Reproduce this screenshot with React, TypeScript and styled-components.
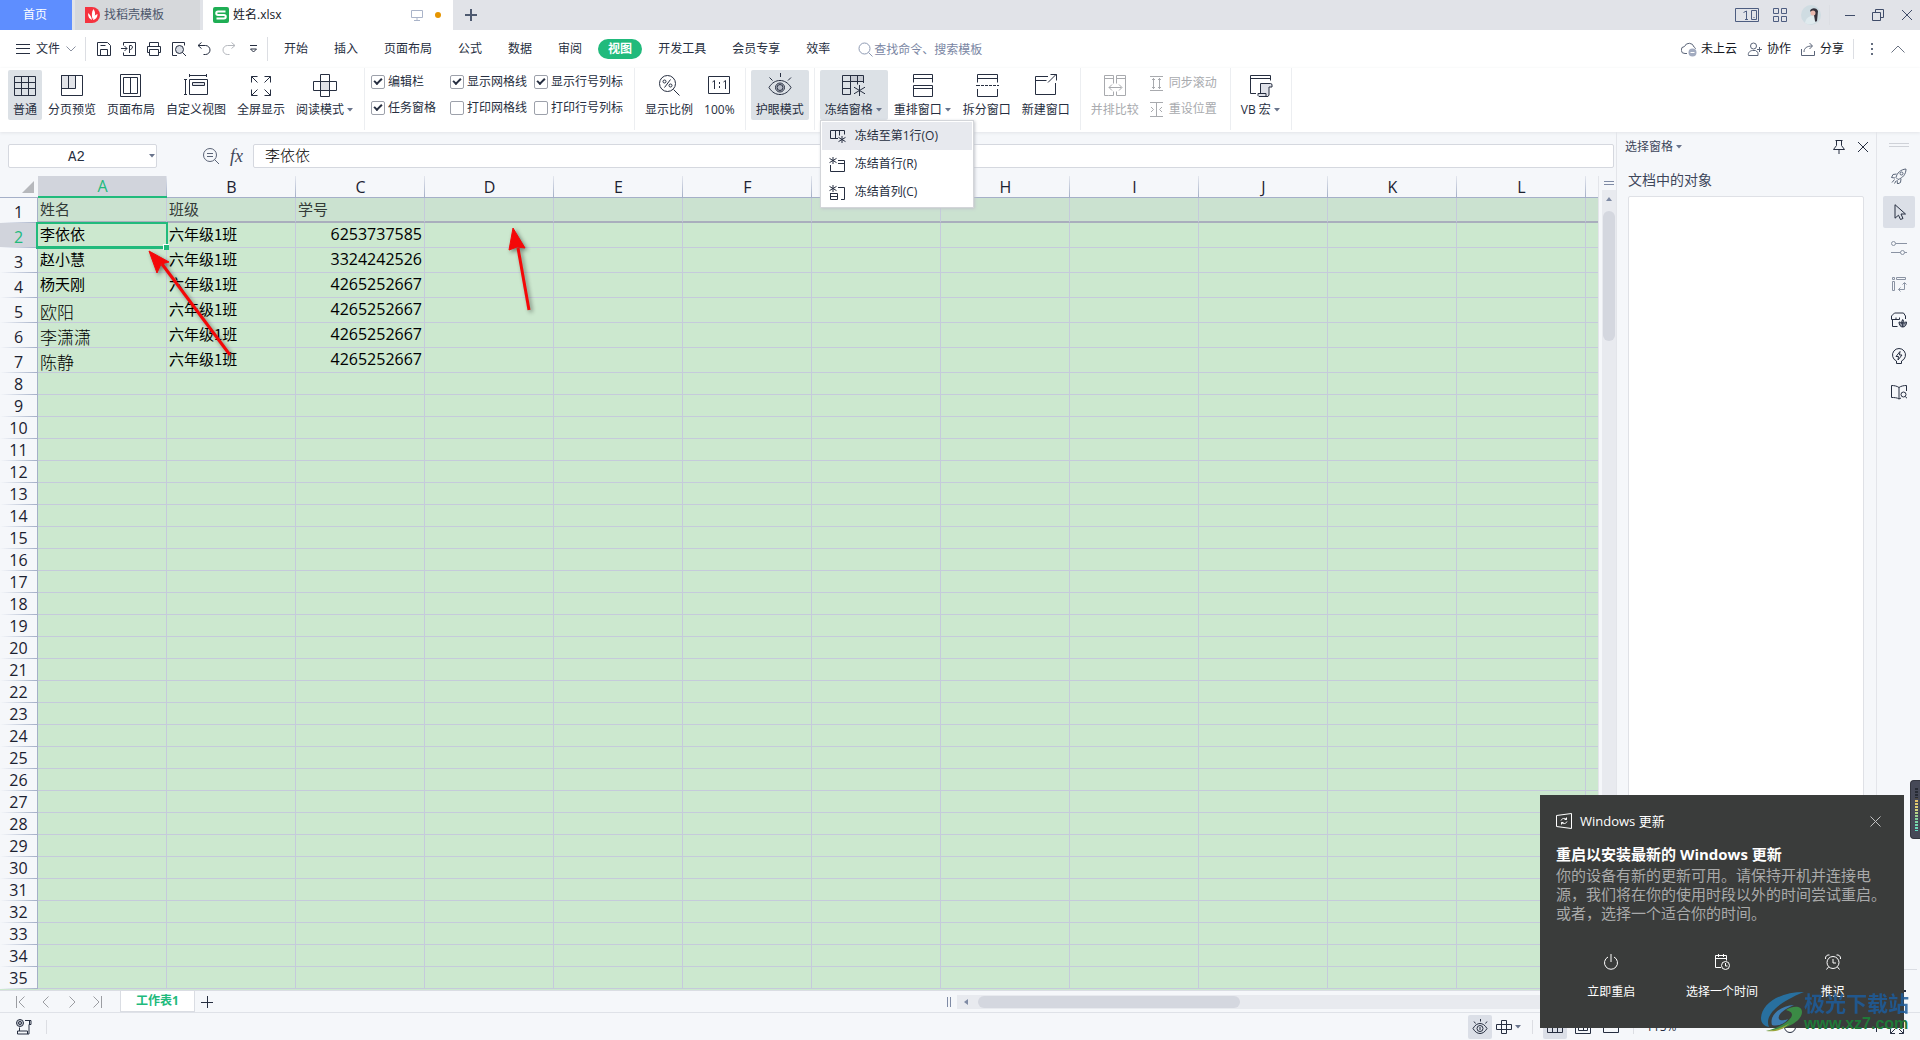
import React from "react";
import styled, { createGlobalStyle, css } from "styled-components";

const ui = `"Open Sans", "Noto Sans CJK SC", sans-serif`;
const cjk = `"Noto Sans CJK SC", sans-serif`;

const c = {
  ink: "#262e40",
  line: "#e3e5ea",
  panel: "#f5f7fa",
  track: "#e8eaef",
  thumb: "#d4d7df",
  active: "#dce1e6",
  rail: "#dbdfe7",
  green: "#21ba7c",
  grid: "#c5cadb",
  head: "#a5b0c8",
  sheet: "#cce8cf",
};

const Global = createGlobalStyle`
  *, *::before, *::after { box-sizing: border-box; }
  body { margin: 0; overflow: hidden; font: 12px/18px ${ui}; color: ${c.ink}; background: ${c.panel}; }
  button, input { font: inherit; color: inherit; }
  button { border: 0; padding: 0; background: none; display: flex; align-items: center; white-space: nowrap; }
  svg { display: block; flex: none; }
`;

/* ---------- icon primitive ---------- */

type IconProps = {
  w?: number;
  h?: number;
  color?: string;
  sw?: number;
  d?: string;
  children?: React.ReactNode;
};

const Icon = ({ w = 16, h, color = c.ink, sw = 1, d, children }: IconProps) => (
  <svg width={w} height={h ?? w} viewBox={`0 0 ${w} ${h ?? w}`} fill="none" stroke={color} strokeWidth={sw} aria-hidden="true">
    {d && <path d={d} />}
    {children}
  </svg>
);

const Caret = ({ color = "#69748c" }: { color?: string }) => (
  <svg width="10" height="6" viewBox="0 0 10 6" aria-hidden="true">
    <path d="M3 1h6L6 4.500z" fill={color} />
  </svg>
);

/* ---------- shell ---------- */

const Shell = styled.div`
  position: relative;
  display: flex;
  flex-direction: column;
  height: 100vh;
  overflow: hidden;
`;

const Spacer = styled.div`
  flex: 1;
`;

const Divider = styled.span<{ $h: number }>`
  flex: none;
  width: 1px;
  height: ${(p) => p.$h}px;
  background: #dcdee3;
`;

/* ---------- title bar ---------- */

const TitleBar = styled.header`
  display: flex;
  align-items: center;
  height: 30px;
  flex: none;
  background: #e1e3e8;
  padding-right: 6px;
`;

const DocTab = styled.button<{ $w: number; $kind: "home" | "idle" | "open" }>`
  width: ${(p) => p.$w}px;
  height: 30px;
  margin-right: 3px;
  gap: 4px;
  padding: 0 12px 0 10px;
  background: ${(p) => ({ home: "#5e8eff", idle: "#d6d8db", open: "#fff" })[p.$kind]};
  color: ${(p) => ({ home: "#fff", idle: "#4c566b", open: "#15181f" })[p.$kind]};
  justify-content: ${(p) => (p.$kind === "home" ? "center" : "flex-start")};
`;

const Dot = styled.span`
  width: 6px;
  height: 6px;
  margin-left: 8px;
  border-radius: 50%;
  background: #e69500;
`;

const TitleTools = styled.div`
  display: flex;
  align-items: center;
  gap: 14px;
`;

const WindowTools = styled.div`
  display: flex;
  align-items: center;
  gap: 14px;
  margin-left: 8px;
`;

/* ---------- menu bar ---------- */

const MenuBar = styled.nav`
  display: flex;
  align-items: center;
  height: 38px;
  flex: none;
  background: #fff;
  padding: 0 14px 0 16px;
`;

const FileButton = styled.button`
  gap: 6px;
  padding-right: 9px;
`;

const QuickTools = styled.div`
  display: flex;
  padding: 0 1px 0 5px;
`;

const QuickButton = styled.button`
  width: 25px;
  height: 24px;
  justify-content: center;
`;

const MenuTabs = styled.div`
  display: flex;
  gap: 6px;
  padding: 0 18px 0 6px;
`;

const MenuTab = styled.button<{ $on?: boolean }>`
  height: 20px;
  padding: 0 10px;
  border-radius: 10px;
  ${(p) =>
    p.$on &&
    css`
      background: ${c.green};
      color: #fff;
      font-weight: 700;
    `}
`;

const Search = styled.label`
  display: flex;
  align-items: center;
  gap: 1px;
  input {
    width: 140px;
    height: 20px;
    padding: 0;
    border: 0;
    outline: 0;
    background: none;
  }
  input::placeholder {
    color: #7a86a3;
    opacity: 1;
  }
`;

const CloudTools = styled.div`
  display: flex;
  align-items: center;
  gap: 9px;
`;

const CloudButton = styled.button`
  gap: 4px;
  color: #15181f;
`;

/* ---------- ribbon ---------- */

const Ribbon = styled.section`
  display: flex;
  height: 64px;
  flex: none;
  padding-left: 3px;
  background: #fff;
  box-shadow: 0 1px 3px #e2e4e8;
`;

const Group = styled.div`
  display: flex;
  gap: 1px;
  height: 62px;
  padding: 2px 5px 0;
  border-right: 1px solid #eceef1;
`;

const Tool = styled.button<{ $on?: boolean; $off?: boolean }>`
  flex-direction: column;
  height: 50px;
  min-width: 34px;
  padding: 3px 5px 0;
  gap: 4px;
  border-radius: 2px;
  background: ${(p) => (p.$on ? c.active : "none")};
  color: ${(p) => (p.$off ? "#a8aaae" : c.ink)};
  span {
    display: flex;
    align-items: center;
  }
`;

const Checks = styled.div`
  display: grid;
  grid-template-columns: 79px 84px 95px;
  grid-template-rows: 26px 26px;
  padding-left: 1px;
  margin-top: -1px;
`;

const Check = styled.label`
  display: flex;
  align-items: center;
  gap: 3px;
  white-space: nowrap;
  input {
    appearance: none;
    position: relative;
    width: 14px;
    height: 14px;
    margin: 0;
    border: 1px solid #9da1ab;
    border-radius: 2px;
    background: #fff;
  }
  input:checked::after {
    content: "";
    position: absolute;
    left: 2px;
    top: 2px;
    width: 8px;
    height: 5px;
    border: solid ${c.ink};
    border-width: 0 0 2px 2px;
    transform: rotate(-45deg);
  }
`;

const SmallTools = styled.div`
  display: grid;
  grid-template-rows: 26px 26px;
  padding: 0 8px 0 5px;
`;

const SmallTool = styled.button`
  gap: 5px;
  color: #a8aaae;
`;

const MenuAnchor = styled.div`
  position: relative;
`;

const Menu = styled.ul`
  position: absolute;
  z-index: 5;
  top: 50px;
  left: 0;
  width: 154px;
  margin: 0;
  padding: 1px;
  list-style: none;
  background: #fff;
  border: 1px solid #d3d5d9;
  box-shadow: 1px 1px 3px #c3c6cc;
`;

const MenuItem = styled.button<{ $on?: boolean }>`
  width: 100%;
  height: 28px;
  padding-left: 7px;
  gap: 9px;
  background: ${(p) => (p.$on ? "#e7e9ee" : "none")};
`;

/* ---------- workspace ---------- */

const Work = styled.main`
  display: flex;
  flex: 1;
  min-height: 0;
`;

const Book = styled.section`
  display: flex;
  flex-direction: column;
  flex: 1;
  min-width: 0;
`;

const FormulaBar = styled.div`
  display: flex;
  align-items: center;
  height: 44px;
  flex: none;
  padding: 4px 2px 0 8px;
`;

const NameBox = styled.label`
  position: relative;
  display: flex;
  align-items: center;
  width: 149px;
  input {
    width: 100%;
    height: 24px;
    padding: 2px 12px 0 0;
    border: 1px solid #d5d8df;
    border-radius: 2px;
    background: #fff;
    text-align: center;
    font: 14px "Liberation Mono", monospace;
  }
  svg {
    position: absolute;
    right: 1px;
  }
`;

const FormulaTools = styled.div`
  display: flex;
  align-items: center;
  width: 96px;
  padding-left: 45px;
  gap: 10px;
`;

const Fx = styled.button`
  font: italic 18px/20px "Liberation Serif", serif;
  color: #3f4658;
`;

const Formula = styled.input`
  flex: 1;
  min-width: 0;
  height: 24px;
  padding: 0 12px 4px 11px;
  border: 1px solid #d5d8df;
  border-radius: 2px;
  background: #fff;
  font: 300 15px/18px ${cjk};
  color: #000;
  outline: 0;
`;

const SheetRow = styled.div`
  display: flex;
  flex: 1;
  min-height: 0;
`;

const Sheet = styled.div`
  position: relative;
  flex: 1;
  min-width: 0;
  overflow: hidden;
  background: ${c.sheet};
`;

const Table = styled.table`
  width: 1715px;
  table-layout: fixed;
  border-collapse: separate;
  border-spacing: 0;
  font: 15px/20px ${cjk};
  color: #000;
  th,
  td {
    padding: 0 2px;
    white-space: nowrap;
  }
`;

const ColHead = styled.th<{ $on?: boolean }>`
  height: 22px;
  font: 16px/20px "Open Sans", sans-serif;
  color: ${(p) => (p.$on ? c.green : "#1c2231")};
  background: linear-gradient(to bottom, #e4e7ee, ${c.head}) right / 1px 100% no-repeat ${(p) => (p.$on ? "#d1d4dc" : c.panel)};
  border-bottom: ${(p) => (p.$on ? `2px solid ${c.green}` : `1px solid ${c.head}`)};
`;

const Corner = styled.td`
  height: 22px;
  background: ${c.panel};
  border-bottom: 1px solid ${c.head};
  svg {
    margin-left: 20px;
  }
`;

const RowHead = styled.th<{ $h: number; $on?: boolean }>`
  height: ${(p) => p.$h}px;
  && {
    padding-bottom: 1px;
  }
  vertical-align: bottom;
  font: 16px/20px "Open Sans", sans-serif;
  color: ${(p) => (p.$on ? c.green : "#1c2231")};
  background: linear-gradient(to right, ${c.panel}, ${c.head}) bottom / 100% 1px no-repeat ${(p) => (p.$on ? "#d1d4dc" : c.panel)};
  border-right: 1px solid ${c.head};
`;

const Cell = styled.td<{ $frozen?: boolean; $num?: boolean; $song?: boolean; $sel?: boolean }>`
  && {
    padding-bottom: ${(p) => (p.$song ? 0 : 2)}px;
  }
  border-right: 1px solid ${c.grid};
  border-bottom: 1px solid ${c.grid};
  ${(p) =>
    p.$frozen &&
    css`
      background: #cbe2d0;
      color: #333b38;
      border-bottom: 2px solid #a9aebd;
    `}
  ${(p) =>
    p.$num &&
    css`
      text-align: right;
      font: 16px/20px "Open Sans", sans-serif;
    `}
  ${(p) =>
    p.$song &&
    css`
      vertical-align: bottom;
      font-size: 17px;
      font-weight: 300;
    `}
  ${(p) =>
    p.$sel &&
    css`
      position: relative;
      &::before {
        content: "";
        position: absolute;
        inset: -1px -2px -2px -2px;
        border: 2px solid ${c.green};
        border-bottom-width: 3px;
      }
      &::after {
        content: "";
        position: absolute;
        right: -3px;
        bottom: -3px;
        width: 6px;
        height: 6px;
        border: solid #fff;
        border-width: 1px 0 0 1px;
        background: ${c.green};
      }
    `}
`;

const VScroll = styled.div`
  display: flex;
  flex-direction: column;
  align-items: center;
  width: 18px;
  flex: none;
  padding: 5px 0 0 3px;
  border-left: 1px solid ${c.line};
  gap: 5px;
`;

const VTrack = styled.div`
  display: flex;
  flex-direction: column;
  align-items: center;
  flex: 1;
  width: 100%;
  padding-top: 7px;
  gap: 10px;
  background: ${c.track};
`;

const Thumb = styled.div<{ $w: number; $h: number }>`
  width: ${(p) => p.$w}px;
  height: ${(p) => p.$h}px;
  border-radius: 6px;
  background: ${c.thumb};
`;

const SheetBar = styled.div`
  display: flex;
  align-items: center;
  height: 22px;
  flex: none;
  padding-left: 15px;
  border-top: 1px solid #dadde3;
`;

const SheetNav = styled.div`
  display: flex;
  width: 105px;
  gap: 14px;
`;

const SheetTab = styled.button`
  width: 75px;
  height: 21px;
  justify-content: center;
  margin-right: 5px;
  background: #fff;
  border: solid #dadde3;
  border-width: 0 1px 1px;
  color: ${c.green};
  font-weight: 700;
`;

const HScroll = styled.div`
  display: flex;
  align-items: center;
  gap: 6px;
  width: 41.8%;
`;

const HTrack = styled.div`
  display: flex;
  align-items: center;
  flex: 1;
  height: 14px;
  padding-left: 6px;
  gap: 9px;
  background: ${c.track};
`;

/* ---------- selection pane ---------- */

const Pane = styled.aside`
  display: flex;
  flex-direction: column;
  width: 261px;
  flex: none;
  padding: 6px 12px 24px 8px;
  border: solid ${c.line};
  border-width: 0 1px;
  color: #3d465a;
`;

const PaneHead = styled.div`
  display: flex;
  align-items: center;
  height: 18px;
  gap: 14px;
  margin-right: -7px;
`;

const PaneTools = styled.div`
  display: flex;
  gap: 10px;
  margin-right: 1px;
`;

const PaneTitle = styled.h2`
  margin: 13px 0 7px 3px;
  font: 14px/20px ${cjk};
`;

const PaneList = styled.div`
  flex: 1;
  margin-left: 3px;
  border: 1px solid #dfe1e6;
  border-radius: 2px;
  background: #fff;
`;

const Rail = styled.aside`
  display: flex;
  flex-direction: column;
  align-items: center;
  width: 43px;
  flex: none;
  gap: 4px;
  padding: 11px 0 0;
`;

const Grip = styled.span`
  width: 20px;
  height: 4px;
  margin-bottom: 9px;
  border: solid #cfd2d8;
  border-width: 1px 0;
`;

const RailButton = styled.button<{ $on?: boolean }>`
  width: 32px;
  height: 32px;
  justify-content: center;
  border-radius: 2px;
  background: ${(p) => (p.$on ? c.rail : "none")};
`;

const RailFoot = styled.div`
  align-self: stretch;
  display: flex;
  justify-content: center;
  height: 43px;
  margin: auto 3px 0;
  border-top: 1px solid #dadde3;
`;

/* ---------- status bar ---------- */

const StatusBar = styled.footer`
  display: flex;
  align-items: center;
  height: 28px;
  flex: none;
  padding: 0 15px;
  border-top: 1px solid #dfe2e8;
`;

const StatusButton = styled.button<{ $on?: boolean }>`
  height: 24px;
  min-width: 24px;
  justify-content: center;
  border-radius: 2px;
  background: ${(p) => (p.$on ? c.rail : "none")};
`;

const StatusGroup = styled.div<{ $after?: number; $before?: number }>`
  display: flex;
  align-items: center;
  gap: 4px;
  margin-left: ${(p) => p.$before ?? 0}px;
  margin-right: ${(p) => p.$after ?? 10}px;
`;

const Zoom = styled.div`
  display: flex;
  align-items: center;
  width: 271px;
  gap: 8px;
  padding-left: 12px;
  input {
    flex: 1;
    min-width: 0;
    appearance: none;
    height: 1px;
    margin: 0;
    background: #9aa3b5;
  }
  input::-webkit-slider-thumb {
    appearance: none;
    width: 12px;
    height: 12px;
    border: 1px solid ${c.ink};
    border-radius: 50%;
    background: #fff;
  }
`;

/* ---------- overlays ---------- */

const Toast = styled.section`
  position: absolute;
  z-index: 6;
  right: 16px;
  bottom: 12px;
  width: 364px;
  height: 233px;
  padding: 15px 13px 0 16px;
  background: #3a3c3b;
  color: #fff;
`;

const ToastHead = styled.div`
  display: flex;
  align-items: center;
  height: 22px;
  gap: 8px;
  padding-right: 10px;
  font-size: 13px;
`;

const ToastTitle = styled.h3`
  margin: 12px 0 0;
  font: 700 15px/20px ${ui};
`;

const ToastText = styled.p`
  margin: 1px 0 0;
  font: 15px/19px ${cjk};
  color: #a9aaaa;
`;

const ToastActions = styled.div`
  display: grid;
  grid-template-columns: repeat(3, 1fr);
  margin: 32px 3px 0 0;
`;

const ToastAction = styled.button`
  flex-direction: column;
  gap: 13px;
`;

const Meter = styled.div`
  position: absolute;
  z-index: 6;
  right: 0;
  top: 780px;
  width: 10px;
  height: 59px;
  padding: 7px 2px 7px 4px;
  border-radius: 4px 0 0 4px;
  background: #464957;
  border: 1px solid #34363f;
  border-right: 0;
`;

const Bars = styled.div`
  height: 100%;
  background: repeating-linear-gradient(to bottom, transparent 0 2px, #464957 2px 3px),
    linear-gradient(to bottom, #262a33 0 24%, #e5bd63 26%, #d8d57c 50%, #83d39b 72%, #63dcc5 100%);
`;

const Watermark = styled.div`
  position: absolute;
  z-index: 7;
  right: 11px;
  bottom: 7px;
  display: flex;
  align-items: center;
`;

const MarkName = styled.div`
  font: 700 21px/24px ${cjk};
  color: #1d5c9c;
  opacity: 0.85;
`;

const MarkUrl = styled.div`
  font: 700 16px/19px "Liberation Sans", sans-serif;
  color: #1f7a38;
`;

const Arrows = styled.svg`
  position: absolute;
  z-index: 3;
  left: 140px;
  top: 220px;
  pointer-events: none;
  filter: drop-shadow(2px 2px 2px rgba(0, 0, 0, 0.45));
`;

/* ---------- data ---------- */

const columns = "ABCDEFGHIJKL".split("");
const cells: string[][] = [
  ["姓名", "班级", "学号"],
  ["李依依", "六年级1班", "6253737585"],
  ["赵小慧", "六年级1班", "3324242526"],
  ["杨天刚", "六年级1班", "4265252667"],
  ["欧阳", "六年级1班", "4265252667"],
  ["李潇潇", "六年级1班", "4265252667"],
  ["陈静", "六年级1班", "4265252667"],
];

const quick: [string, React.ReactNode][] = [
  ["保存", <Icon d="M1.500 1.500h10l3 3v10h-13zM4.500 14.500v-6h7v6M4.500 4.500h5" />],
  ["输出为PDF", <Icon d="M2.500 4.500v-3h12v13h-12v-3M0 7.500h6M3.500 5l2.500 2.500-2.500 2.500M8.500 12v-7.500h2a2 2 0 1 1-2.500 3.500" />],
  ["打印", <Icon d="M3.500 5.500v-4h9v4M3.500 11.500h-2v-6h13v6h-2M3.500 8.500h9v6h-9z" />],
  [
    "打印预览",
    <Icon>
      <path d="M6 14.500H1.500v-13h12v3" />
      <circle cx="8.500" cy="8.500" r="4" fill="#d8dce4" />
      <path d="M11.500 11.500l3.500 3.500" />
    </Icon>,
  ],
  ["撤销", <Icon d="M5.500 1.500l-3.500 3 3.500 3M2 4.500h7.500a4.500 4.500 0 0 1 0 9h-2" />],
  ["恢复", <Icon color="#b4b7bd" d="M10.500 1.500l3.500 3-3.500 3M14 4.500H6.500a4.500 4.500 0 0 0 0 9h2" />],
  ["更多", <Icon w={9} h={10} d="M1 1.500h7M1.500 5l3 3 3-3z" />],
];

const asterisk = (x: number, y: number, r: number) =>
  `M${x} ${y - r}v${2 * r}M${x - r} ${y - r * 0.6}l${2 * r} ${1.2 * r}M${x + r} ${y - r * 0.6}l${-2 * r} ${1.2 * r}`;

const viewTools: [string, React.ReactNode, boolean?, boolean?][] = [
  ["普通", <Icon w={24} d="M1.500 3.500h21v19h-21zM8.500 3.500v19M15.500 3.500v19M1.500 9.500h21M1.500 15.500h21" />, true],
  [
    "分页预览",
    <Icon w={24}>
      <path d="M1.500 2.500h14v13h-14z" fill="#e2e4e9" />
      <path d="M1.500 2.500h21v20h-21zM8.500 2.500v13" />
    </Icon>,
  ],
  ["页面布局", <Icon w={24} d="M1.500 1.500h20v22h-20zM4.500 4.500h14v16h-14zM11.500 4.500v16" />],
  [
    "自定义视图",
    <Icon w={24}>
      <path d="M5.500 6.500h18v15h-18zM5 2.500h18M5.500 1v3M22.500 1v3M1.500 6.500v15M0 6.500h3M0 21.500h3" />
      <path d="M8.500 9.500h12v3h-12z" fill="#dfe1e7" />
    </Icon>,
  ],
  ["全屏显示", <Icon w={24} d="M8.500 3.500h-6v6M2.500 3.500l6 6M15.500 3.500h6v6M21.500 3.500l-6 6M8.500 22.500h-6v-6M2.500 22.500l6-6M15.500 22.500h6v-6M21.500 22.500l-6-6" />],
  [
    "阅读模式",
    <Icon w={24}>
      <path d="M7.500 8.500h9v9h-9z" fill="#dfe1e7" />
      <path d="M7.500 1.500h9v22h-9zM.500 8.500h23v9h-23z" />
    </Icon>,
    false,
    true,
  ],
];

const checks: [string, boolean][] = [
  ["编辑栏", true],
  ["显示网格线", true],
  ["显示行号列标", true],
  ["任务窗格", true],
  ["打印网格线", false],
  ["打印行号列标", false],
];

const windowTools: [string, React.ReactNode, boolean?][] = [
  [
    "重排窗口",
    <Icon w={24} d="M2.500 9.500v-8h19v8M2.500 5.500h19M2.500 12.500h19v11h-19zM2.500 15.500h19" />,
    true,
  ],
  ["拆分窗口", <Icon w={24} d="M2.500 9.500v-8h20v8M2.500 5.500h20M1 12.500h4M6 12.500h3M10 12.500h3M14 12.500h3M18 12.500h3M22 12.500h2M2.500 16v7.500h20v-7.500" />],
  ["新建窗口", <Icon w={24} d="M14 3.500H1.500v18h20V10M1.500 7.500h11M14 9.500l8.500-8.500M16.500 1.500h6v6" />],
];

const freezeItems: [string, React.ReactNode][] = [
  ["冻结至第1行(O)", <Icon w={17} d={"M9 10.500H1.500v-8h14v4M6.500 2.500v8M10.500 2.500v5" + asterisk(13, 11.500, 3.500)} />],
  ["冻结首行(R)", <Icon w={17} d={"M9 4.500h6.500v11h-14V9M9 7.500h6" + asterisk(4, 4.500, 3.500)} />],
  ["冻结首列(C)", <Icon w={17} d={"M9 3.500h6.500v12H12M1.500 9v6.500h7V9.500h-7M1.500 12.500h7" + asterisk(4, 4.500, 3.500)} />],
];

const rail: [string, React.ReactNode, boolean?][] = [
  [
    "快捷",
    <Icon color="#5b6679">
      <path d="M5 9.500c1-4.500 4.500-8 10-8.500 0 5.500-3.500 9-8 10.500zM5.500 6l-3.500.500-1.500 3 3.500.500M10 11l-.500 3.500-3 1.500-.500-4M3.500 11.500l-2.500 3M5 13l-1.500 2.500" />
      <circle cx="10.500" cy="5.500" r="1.500" />
    </Icon>,
  ],
  ["选择", <Icon d="M4 .700v13.500l3.500-3 2 4.300 2.500-1-2-4.500h4.500z" />, true],
  [
    "属性",
    <Icon color="#8a93a3">
      <circle cx="2.500" cy="3.500" r="2" />
      <circle cx="11.500" cy="12.500" r="2" />
      <path d="M4.500 3.500H16M0 12.500h9.500M13.500 12.500H16" />
    </Icon>,
  ],
  ["对齐", <Icon color="#8a93a3" d="M1.500 1.500h2v2h-2zM5.500 1.500h9v2h-9zM1.500 5.500h2v9h-2zM13.500 7v6.500h-6M11.500 8.500l2-2 2 2M9.500 11.500l-2 2 2 2" />],
  [
    "素材",
    <Icon>
      <path d="M6.500 14.500H1.500V8M14.500 7V4l-2-3h-9L.500 4v3.500h4.500V5.500M5 7.500h3.500V5.500" />
      <path d="M8 10c0 3 1.500 5 3.800 5s3.700-2 3.700-5c-1.200 0-2 .500-2.500 1.500 0-1.500-.500-3-1.300-4-.700 1-1.200 2.500-1.200 4C10 10.500 9.200 10 8 10z" fill="#8f95a3" />
      <path d="M11.700 10v5" />
    </Icon>,
  ],
  [
    "智能",
    <Icon>
      <path d="M5.500 13a6.500 6.500 0 1 1 5 0v2.500h-5zM9 3.500L5 8.500h2.500L7 12l4-5H8.500z" />
    </Icon>,
  ],
  [
    "查阅",
    <Icon>
      <path d="M8 3.500C6 2 3 1.500.500 1.500v12c2.500 0 5.500 0 7.500 1.500V3.500c2-1.500 5-2 7.500-2V7M8 15l2-1" />
      <circle cx="12.500" cy="10.500" r="2.500" />
      <path d="M14.500 12.500l1.500 2" />
    </Icon>,
  ],
];

const EyeIcon = () => (
  <Icon w={24}>
    <path d="M1 14.500C4 9.500 8 7.500 12 7.500s8 2 11 7c-3 5-7 7-11 7s-8-2-11-7z" />
    <circle cx="12" cy="14.500" r="4.500" fill="#c9cdd5" />
    <circle cx="12" cy="14.500" r="3" fill="#b5bac5" />
    <path d="M12.500 0v4M1.500 4.500l3 3M23 4.500l-3 3" />
  </Icon>
);

/* ---------- sections ---------- */

const TitleArea = () => (
  <TitleBar>
    <DocTab $w={72} $kind="home">首页</DocTab>
    <DocTab $w={125} $kind="idle">
      <svg width="15" height="16" viewBox="0 0 15 16" aria-hidden="true">
        <path d="M0 0h7a8 8 0 0 1 0 16H0z" fill="#f5333f" />
        <path d="M8.500 2c-2 3-2 6-1 10 3-3 3.500-6 1-10zM3 6c0 4 1.500 6 4 7-.500-3-1.500-5-4-7zM12.500 7c-3 1-4.500 3-4.500 6 3-.500 4.500-3 4.500-6z" fill="#fff" />
      </svg>
      找稻壳模板
    </DocTab>
    <DocTab $w={250} $kind="open">
      <svg width="16" height="16" viewBox="0 0 16 16" aria-hidden="true">
        <rect width="16" height="16" rx="2" fill="#1fae55" />
        <path d="M12.500 4.500H5A1.700 1.700 0 0 0 5 8h6a1.700 1.700 0 0 1 0 3.500H3.500" fill="none" stroke="#fff" strokeWidth="2" />
      </svg>
      姓名.xlsx
      <Spacer />
      <Icon w={12} color="#aab4c9" d="M.500 1.500h11v7H.500zM6 8.500v3M3 11.500h6" />
      <Dot />
    </DocTab>
    <button aria-label="新建标签">
      <Icon w={30} h={14} color="#4e5a70" sw={2} d="M9 7h12M15 1v12" />
    </button>
    <Spacer />
    <TitleTools>
      <button aria-label="窗口">
        <Icon w={24} h={14} color="#4d5d80" d="M.500.500h23v13H.500zM16.500 2.500h5v9h-5zM8.500 4.500l3-1.500v8M10 11.500h3M18.500 9.500h1" />
      </button>
      <button aria-label="应用">
        <Icon w={14} color="#4d5d80" d="M.500.500h5v5h-5zM8.500.500h5v5h-5zM.500 8.500h5v5h-5zM8.500 8.500h5v5h-5z" />
      </button>
      <button aria-label="账户">
        <svg width="20" height="20" viewBox="0 0 20 20" aria-hidden="true">
          <circle cx="10" cy="10" r="10" fill="#cfdce2" />
          <path d="M4 18c1-5 4-7 7-7s4 2 4 6a10 10 0 0 1-11 1z" fill="#dfeaee" />
          <path d="M9 6c1-3 6-4 8 0l-1 10c-1 1-2 1-2 0l-1-6z" fill="#33303a" />
          <circle cx="12" cy="8" r="2.500" fill="#e9b9ae" />
        </svg>
      </button>
    </TitleTools>
    <WindowTools>
      <Divider $h={20} />
      <button aria-label="最小化"><Icon w={14} color="#3f4c69" d="M1 7.500h10" /></button>
      <button aria-label="还原"><Icon w={14} color="#3f4c69" d="M.500 4.500h8v8h-8zM3.500 4v-2.500h8v8H9" /></button>
      <button aria-label="关闭"><Icon w={14} color="#3f4c69" d="M2 2l10 10M12 2L2 12" /></button>
    </WindowTools>
  </TitleBar>
);

const MenuArea = () => (
  <MenuBar>
    <FileButton>
      <Icon w={14} h={12} d="M0 1.500h14M0 5.500h14M0 10.500h14" />
      文件
      <Icon w={10} h={6} color="#8b91a0" d="M.500.500L5 5 9.500.500" />
    </FileButton>
    <Divider $h={24} />
    <QuickTools>
      {quick.map(([name, icon]) => (
        <QuickButton key={name} aria-label={name}>{icon}</QuickButton>
      ))}
    </QuickTools>
    <Divider $h={24} />
    <MenuTabs>
      {["开始", "插入", "页面布局", "公式", "数据", "审阅", "视图", "开发工具", "会员专享", "效率"].map((t) => (
        <MenuTab key={t} $on={t === "视图"}>{t}</MenuTab>
      ))}
    </MenuTabs>
    <Search>
      <Icon w={15} color="#8e9ab3">
        <circle cx="6.500" cy="6.500" r="5.500" />
        <path d="M10.500 10.500l4 4" />
      </Icon>
      <input type="text" aria-label="查找命令" placeholder="查找命令、搜索模板" />
    </Search>
    <Spacer />
    <CloudTools>
      <CloudButton>
        <Icon color="#5a6478">
          <path d="M6 12.500H4a3.500 3.500 0 0 1-.500-7 5 5 0 0 1 9.500.500c1 .500 1.500 1.500 1.500 2" />
          <circle cx="11.500" cy="11.500" r="4" fill="#a2abc0" stroke="none" />
          <path d="M9.500 11.500h4" stroke="#fff" />
        </Icon>
        未上云
      </CloudButton>
      <CloudButton>
        <Icon w={17} color="#5a6478">
          <circle cx="7.500" cy="5" r="3" />
          <path d="M2.500 14.500c-1-3 2-5 4-5h3l2.500 2v3zM11 8.500h5M13.500 6v5" />
        </Icon>
        协作
      </CloudButton>
      <CloudButton>
        <Icon color="#5a6478" d="M1.500 8v6.500h13V10M4 11c0-4 3-6 8-6M9.500 2l3 3-3 3" />
        分享
      </CloudButton>
      <Divider $h={20} />
      <button aria-label="更多选项">
        <Icon w={18} h={12} color="#646d7f" sw={2} d="M9 0v2M9 5v2M9 10v2" />
      </button>
      <button aria-label="收起功能区">
        <Icon w={16} h={10} color="#6a7282" d="M1.500 8.500L8 2l6.500 6.500" />
      </button>
    </CloudTools>
  </MenuBar>
);

const RibbonArea = () => (
  <Ribbon>
    <Group>
      {viewTools.map(([name, icon, on, caret]) => (
        <Tool key={name} $on={on}>
          {icon}
          <span>{name}{caret && <Caret />}</span>
        </Tool>
      ))}
    </Group>
    <Group>
      <Checks>
        {checks.map(([name, on]) => (
          <Check key={name}>
            <input type="checkbox" defaultChecked={on} />
            {name}
          </Check>
        ))}
      </Checks>
    </Group>
    <Group>
      <Tool>
        <Icon w={24}>
          <circle cx="10.500" cy="10.500" r="8" />
          <path d="M16.500 16.500l6 6M7.500 14.500l6-8" />
          <circle cx="7.500" cy="8.500" r="1.500" />
          <circle cx="13.500" cy="12.500" r="1.500" />
        </Icon>
        <span>显示比例</span>
      </Tool>
      <Tool>
        <Icon w={24} d="M1.500 3.500h21v17h-21zM5.500 9l2-1.500v8.500M16.500 9l2-1.500v8.500M12.500 9v2M12.500 13v2" />
        <span>100%</span>
      </Tool>
    </Group>
    <Group>
      <Tool $on>
        <EyeIcon />
        <span>护眼模式</span>
      </Tool>
    </Group>
    <Group>
      <MenuAnchor>
        <Tool $on aria-haspopup="menu" aria-expanded="true">
          <Icon w={24}>
            <path d="M8.500 2.500h13v6h-13z" fill="#c6cad2" stroke="none" />
            <path d={"M21.500 10V2.500h-21v19h8v-19M.500 8.500h21M15.500 2.500v9M.500 15.500h8" + asterisk(17.500, 17.500, 5.500)} />
          </Icon>
          <span>冻结窗格<Caret /></span>
        </Tool>
        <Menu>
          {freezeItems.map(([name, icon], i) => (
            <li key={name}>
              <MenuItem $on={i === 0}>{icon}{name}</MenuItem>
            </li>
          ))}
        </Menu>
      </MenuAnchor>
      {windowTools.map(([name, icon, caret]) => (
        <Tool key={name}>
          {icon}
          <span>{name}{caret && <Caret />}</span>
        </Tool>
      ))}
    </Group>
    <Group>
      <Tool $off>
        <Icon w={24} color="#a8aaae" d="M5.500 22.500h-4v-20h9v8M1.500 5.500h9M13.500 10.500v-8h9v20h-9v-4M13.500 5.500h9M10.500 18.500v4h-5M6 14.500h12.500M9 11.500l-3 3 3 3M16 11.500l3 3-3 3" />
        <span>并排比较</span>
      </Tool>
      <SmallTools>
        <SmallTool>
          <Icon w={14} h={15} color="#a8aaae" d="M0 .500h13M0 14.500h13M3.500 2v11M9.500 2v11M2 4l1.500-1.500L5 4M2 11l1.500 1.500L5 11M8 4l1.500-1.500L11 4M8 11l1.500 1.500L11 11" />
          同步滚动
        </SmallTool>
        <SmallTool>
          <Icon w={14} h={15} color="#a8aaae" d="M0 .500h13M0 14.500h13M6.500 .500v14M1 5l2.500 2.500L1 10M12 5L9.500 7.500 12 10" />
          重设位置
        </SmallTool>
      </SmallTools>
    </Group>
    <Group>
      <Tool>
        <Icon w={24}>
          <path d="M7 20.500H1.500v-18h20v5M1.500 5.500h20" />
          <path d="M11.500 20.500v-10h10a1.500 1.500 0 0 1 1.500 1.500v2h-3v8l-1 1.500h-9l-1-1v-2h8v3" fill="#dfe1e8" />
        </Icon>
        <span>VB 宏<Caret /></span>
      </Tool>
    </Group>
  </Ribbon>
);

const Grid = () => (
  <Sheet>
    <Table>
      <colgroup>
        <col style={{ width: 38 }} />
        {columns.map((k) => <col key={k} style={{ width: 129 }} />)}
        <col style={{ width: 129 }} />
      </colgroup>
      <thead>
        <tr>
          <Corner>
            <svg width="12" height="12" viewBox="0 0 12 12" aria-hidden="true"><path d="M12 0v12H0z" fill="#b6b8bc" /></svg>
          </Corner>
          {columns.map((k) => <ColHead key={k} $on={k === "A"} scope="col">{k}</ColHead>)}
          <ColHead />
        </tr>
      </thead>
      <tbody>
        {Array.from({ length: 35 }, (_, r) => (
          <tr key={r}>
            <RowHead $h={r < 7 ? 25 : 22} $on={r === 1} scope="row">{r + 1}</RowHead>
            {Array.from({ length: 13 }, (_, k) => (
              <Cell key={k} $frozen={r === 0} $num={k === 2 && r > 0} $song={k === 0 && r > 3} $sel={k === 0 && r === 1}>
                {cells[r]?.[k]}
              </Cell>
            ))}
          </tr>
        ))}
      </tbody>
    </Table>
  </Sheet>
);

const BookArea = () => (
  <Book>
    <FormulaBar>
      <NameBox>
        <input type="text" aria-label="名称框" defaultValue="A2" />
        <Caret />
      </NameBox>
      <FormulaTools>
        <button aria-label="放大编辑栏">
          <Icon w={18} color="#5b6477">
            <circle cx="8" cy="8" r="6.500" />
            <path d="M12.500 12.500l4.500 4.500M5 6.500h6M5 9.500h6" />
          </Icon>
        </button>
        <Fx>fx</Fx>
      </FormulaTools>
      <Formula type="text" aria-label="编辑栏" defaultValue="李依依" />
    </FormulaBar>
    <SheetRow>
      <Grid />
      <VScroll>
        <Icon w={12} h={4} color="#7f8ba5" d="M1 .500h10M1 3.500h10" />
        <VTrack>
          <svg width="8" height="4" viewBox="0 0 8 4" aria-hidden="true"><path d="M1 4l3-4 3 4z" fill="#7f8ba5" /></svg>
          <Thumb $w={12} $h={130} />
        </VTrack>
      </VScroll>
    </SheetRow>
    <SheetBar>
      <SheetNav>
        <button aria-label="第一张"><Icon w={12} color="#9b9da2" d="M1.500 0v12M9.500.500L4 6l5.500 5.500" /></button>
        <button aria-label="上一张"><Icon w={12} color="#9b9da2" d="M7.500.500L2 6l5.500 5.500" /></button>
        <button aria-label="下一张"><Icon w={12} color="#9b9da2" d="M2.500.500L8 6l-5.500 5.500" /></button>
        <button aria-label="最后一张"><Icon w={12} color="#9b9da2" d="M.500.500L6 6 .500 11.500M8.500 0v12" /></button>
      </SheetNav>
      <SheetTab>工作表1</SheetTab>
      <button aria-label="新建工作表"><Icon w={14} d="M1 7.500h12M7.500 1v12" /></button>
      <Spacer />
      <HScroll>
        <Icon w={4} h={10} color="#7f8ba5" d="M.500 0v10M3.500 0v10" />
        <HTrack>
          <svg width="6" height="6" viewBox="0 0 6 6" aria-hidden="true"><path d="M5 0v6L1 3z" fill="#7f8ba5" /></svg>
          <Thumb $w={262} $h={12} />
        </HTrack>
      </HScroll>
    </SheetBar>
  </Book>
);

const SideArea = () => (
  <>
    <Pane>
      <PaneHead>
        <button>选择窗格<Caret /></button>
        <Spacer />
        <PaneTools>
          <button aria-label="固定"><Icon w={14} d="M3.500.500h7M4.500.500v5l-3 4h11l-3-4v-5M7 9.500V14" /></button>
          <button aria-label="关闭窗格"><Icon w={14} d="M2 2l10 10M12 2L2 12" /></button>
        </PaneTools>
      </PaneHead>
      <PaneTitle>文档中的对象</PaneTitle>
      <PaneList />
    </Pane>
    <Rail>
      <Grip />
      {rail.map(([name, icon, on]) => (
        <RailButton key={name} $on={on} aria-label={name}>{icon}</RailButton>
      ))}
      <RailFoot>
        <button aria-label="更多面板"><Icon w={16} h={4} sw={2} d="M1 2h2M7 2h2M13 2h2" /></button>
      </RailFoot>
    </Rail>
  </>
);

const StatusArea = () => (
  <StatusBar>
    <StatusGroup $after={13}>
      <button aria-label="宏录制">
        <Icon w={18}>
          <circle cx="5" cy="5" r="3.500" fill="#c6cad3" />
          <circle cx="5" cy="5" r="1.500" />
          <path d="M10 2.500h6v4h-2v9.500H2.500v-3h10v3M4.500 9.500v3.500M14.500 2.500v4" />
        </Icon>
      </button>
    </StatusGroup>
    <Divider $h={14} />
    <Spacer />
    <StatusGroup>
      <StatusButton $on aria-label="护眼">
        <Icon>
          <path d="M1 9.500c2-3.500 4.500-5 7-5s5 1.500 7 5c-2 3.500-4.500 5-7 5s-5-1.500-7-5zM8.500 0v2.500M2 2.500l1.500 2M15 2.500l-1.500 2" />
          <circle cx="8" cy="9.500" r="3" />
          <path d="M8 8v3" />
        </Icon>
      </StatusButton>
      <StatusButton aria-label="阅读">
        <Icon d="M5.500 1.500h5v13h-5zM.500 5.500h15v5H.500z" />
        <Caret />
      </StatusButton>
    </StatusGroup>
    <Divider $h={14} />
    <StatusGroup $before={10}>
      <StatusButton $on aria-label="普通视图"><Icon d="M.500 2.500h15v11H.500zM5.500 2.500v11M10.500 2.500v11M.500 8.500h15" /></StatusButton>
      <StatusButton aria-label="分页视图"><Icon d="M.500 1.500h15v13H.500zM3.500 4.500h9v7h-9zM8.500 4.500v7" /></StatusButton>
      <StatusButton aria-label="页面视图"><Icon d="M.500 2.500h15v11H.500z" /></StatusButton>
    </StatusGroup>
    <Divider $h={14} />
    <Zoom>
      <span>115%</span>
      <Icon w={10} d="M0 5.500h10" />
      <input type="range" aria-label="缩放" min="10" max="400" defaultValue="225" />
      <Icon w={10} d="M0 5.500h10M5.500 0v10" />
      <Icon w={16} d="M6 1.500H1.500V6M10 1.500h4.500V6M6 14.500H1.500V10M10 14.500h4.500V10M1.500 14.500L6 10M14.500 14.500L10 10" />
    </Zoom>
  </StatusBar>
);

const ToastArea = () => (
  <Toast>
    <ToastHead>
      <Icon color="#fff">
        <path d="M.500 2.500l15-2v15l-15-2z" />
        <path d="M5 7.500c.500-2 4-3 5.500-1M10.500 4.500v2h-2M11 8.500c-.500 2-4 3-5.500 1M5.500 11.500v-2h2" />
      </Icon>
      Windows 更新
      <Spacer />
      <button aria-label="关闭通知"><Icon w={11} color="#c0c1c1" d="M.500.500l10 10M10.500.500l-10 10" /></button>
    </ToastHead>
    <ToastTitle>重启以安装最新的 Windows 更新</ToastTitle>
    <ToastText>你的设备有新的更新可用。请保持开机并连接电源，我们将在你的使用时段以外的时间尝试重启。或者，选择一个适合你的时间。</ToastText>
    <ToastActions>
      <ToastAction>
        <Icon color="#fff" d="M5 3a6.500 6.500 0 1 0 6 0M8 0v8" />
        立即重启
      </ToastAction>
      <ToastAction>
        <Icon color="#fff">
          <path d="M7 13.500H1.500v-12h11v5M1.500 4.500h11M4.500 0v3M9.500 0v3" />
          <circle cx="11.500" cy="11.500" r="4" />
          <path d="M11.500 9v3h2" />
        </Icon>
        选择一个时间
      </ToastAction>
      <ToastAction>
        <Icon color="#fff">
          <circle cx="8" cy="8.500" r="6" />
          <path d="M8 5v4h3M.500 5c-.500-3 2-4.500 4-4M15.500 5c.500-3-2-4.500-4-4M3.500 13L1.500 15.500M12.500 13l2 2.500" />
        </Icon>
        推迟
      </ToastAction>
    </ToastActions>
  </Toast>
);

export default function App() {
  return (
    <Shell>
      <Global />
      <TitleArea />
      <MenuArea />
      <RibbonArea />
      <Work>
        <BookArea />
        <SideArea />
      </Work>
      <StatusArea />
      <Arrows width="400" height="140" viewBox="0 0 400 140" aria-hidden="true">
        <path d="M90 135L22 44" stroke="#f40808" strokeWidth="3" />
        <path d="M9 31l20 11-8 2-4 9z" fill="#f40808" stroke="#f40808" />
        <path d="M389 90l-11-62" stroke="#f40808" strokeWidth="3" />
        <path d="M373 8l12 20-8-1-8 3z" fill="#f40808" stroke="#f40808" />
      </Arrows>
      <Meter><Bars /></Meter>
      <ToastArea />
      <Watermark>
        <svg width="44" height="42" viewBox="0 0 44 42" aria-hidden="true">
          <path d="M44 1C20 1 2 12 1 27c0 5 3 8 8 9-4-9 3-22 35-35z" fill="#28709f" />
          <path d="M12 34c-3-10 8-19 22-20-10 4-17 10-15 14 2 3 9 0 9 0-2 4-10 8-16 6z" fill="#3d7cb0" />
          <path d="M26 19c8-5 16-4 16 2 0 9-15 18-36 19 13-3 25-10 26-16 0-3-3-4-6-5z" fill="#3b8a45" />
          <path d="M6 40c10-1 18-4 24-8-7 7-14 9-24 8z" fill="#9aa63a" />
        </svg>
        <div>
          <MarkName>极光下载站</MarkName>
          <MarkUrl>www.xz7.com</MarkUrl>
        </div>
      </Watermark>
    </Shell>
  );
}
